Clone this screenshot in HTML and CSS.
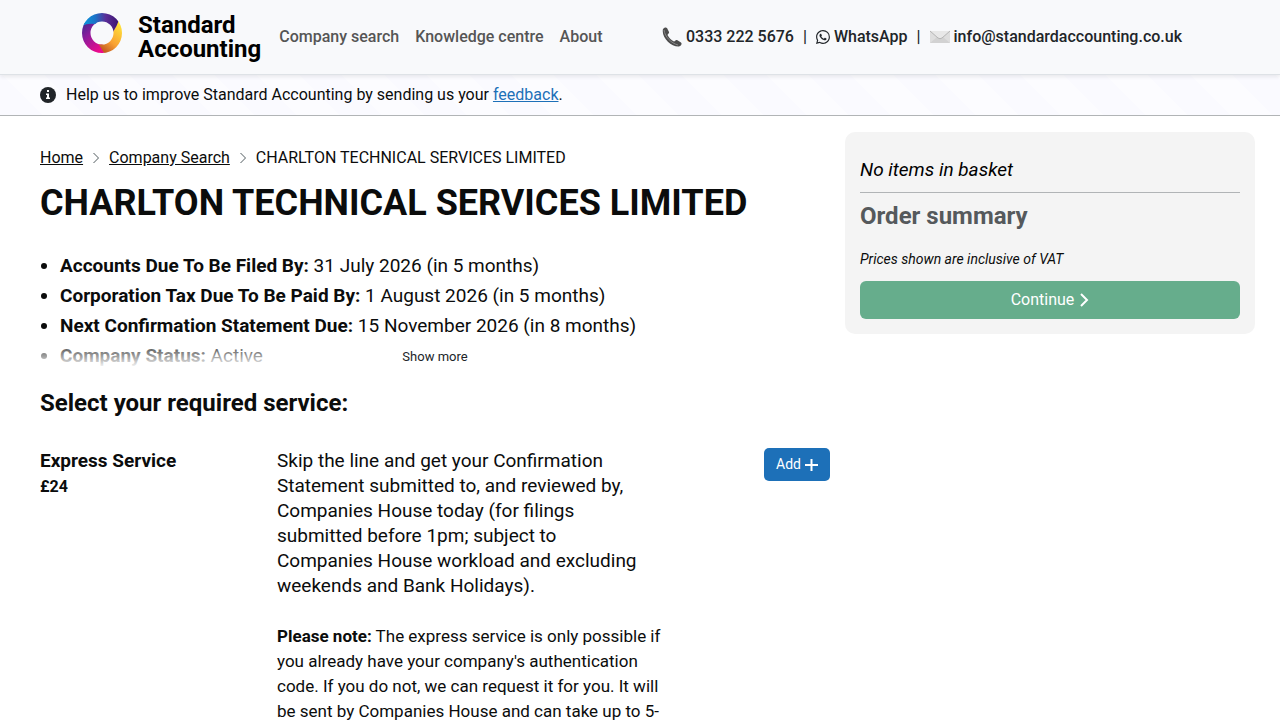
FILE: index.html
```html
<!DOCTYPE html>
<html lang="en">
<head>
<meta charset="utf-8">
<meta name="viewport" content="width=device-width, initial-scale=1">
<title>CHARLTON TECHNICAL SERVICES LIMITED</title>
<link rel="stylesheet" href="styles.css">
</head>
<body>
<header class="site-header">
  <a class="brand" href="#">
    <svg class="brand-logo" viewBox="0 0 40 40" aria-hidden="true">
      <defs>
        <linearGradient id="top" x1="0" y1="0" x2="1" y2="0"><stop offset="0" stop-color="#0a9be0"/><stop offset=".35" stop-color="#1a74c8"/><stop offset=".65" stop-color="#5b2d96"/><stop offset="1" stop-color="#3a1470"/></linearGradient>
        <linearGradient id="left" x1="0" y1="0" x2=".7" y2="1"><stop offset="0" stop-color="#3f2a90"/><stop offset=".4" stop-color="#8c1c9c"/><stop offset="1" stop-color="#ee0a8c"/></linearGradient>
        <linearGradient id="right" x1=".8" y1="0" x2=".2" y2="1"><stop offset="0" stop-color="#ffe93b"/><stop offset=".6" stop-color="#f9a032"/><stop offset="1" stop-color="#b8501f"/></linearGradient>
        <clipPath id="ring"><path clip-rule="evenodd" d="M0 20a20 20 0 1 0 40 0a20 20 0 1 0-40 0ZM8.500 20a11.500 11.500 0 1 0 23 0a11.500 11.500 0 1 0-23 0Z"/></clipPath>
      </defs>
      <g clip-path="url(#ring)">
        <path fill="url(#left)" d="M0 10H20V28L22 40H0Z"/>
        <path fill="url(#right)" d="M37 7H40V40H22L16 30L30 20Z"/>
        <path fill="url(#top)" d="M0 13V0H33L37 7Q35 13 31 19H20L13 11Q5 10 0 13Z"/>
      </g>
    </svg>
    <span class="brand-name">Standard<br>Accounting</span>
  </a>
  <nav class="main-nav">
    <a href="#">Company search</a>
    <a href="#">Knowledge centre</a>
    <a href="#">About</a>
  </nav>
  <div class="contact">
    <a href="#"><svg class="icon-phone" viewBox="0 0 20 20" aria-hidden="true"><path fill="#4d4d4d" d="M1 2C2 .5 4 0 5 1L7 5C7.500 6.500 5.500 7 5.500 8C7 11 9 13 12 14.500C13 14.500 13.500 12.500 15 13L19 15.500C20.500 17 19 19 17 19.500C9 20-1 10 1 2Z"/><path fill="none" stroke="#888" d="M2 3C3 10 9 16 16 18"/></svg>0333 222 5676</a>
    <span>|</span>
    <a href="#"><svg class="icon-whatsapp" viewBox="0 0 16 16" aria-hidden="true"><path fill="currentColor" d="M13.601 2.326A7.850 7.850 0 0 0 7.994 0C3.627 0 .068 3.558.064 7.926c0 1.399.366 2.760 1.057 3.965L0 16l4.204-1.102a7.900 7.900 0 0 0 3.790.965h.004c4.368 0 7.926-3.558 7.930-7.930A7.900 7.900 0 0 0 13.600 2.326zM7.994 14.521a6.600 6.600 0 0 1-3.356-.920l-.240-.144-2.494.654.666-2.433-.156-.251a6.560 6.560 0 0 1-1.007-3.505c0-3.626 2.957-6.584 6.591-6.584a6.560 6.560 0 0 1 4.660 1.931 6.560 6.560 0 0 1 1.928 4.660c-.004 3.639-2.961 6.592-6.592 6.592zm3.615-4.934c-.197-.099-1.170-.578-1.353-.646-.182-.065-.315-.099-.445.099-.133.197-.513.646-.627.775-.114.133-.232.148-.430.050-.197-.100-.836-.308-1.592-.985-.590-.525-.985-1.175-1.103-1.372-.114-.198-.011-.304.088-.403.087-.088.197-.232.296-.346.100-.114.133-.198.198-.330.065-.134.034-.248-.015-.347-.050-.099-.445-1.076-.612-1.470-.160-.389-.323-.335-.445-.340-.114-.007-.247-.007-.380-.007a.730.730 0 0 0-.529.247c-.182.198-.691.677-.691 1.654s.710 1.916.810 2.049c.098.133 1.394 2.132 3.383 2.992.470.205.840.326 1.129.418.475.152.904.129 1.246.080.380-.058 1.171-.480 1.338-.943.164-.464.164-.860.114-.943-.049-.084-.182-.133-.380-.232z"/></svg>WhatsApp</a>
    <span>|</span>
    <a href="#"><svg class="icon-mail" viewBox="0 0 20 14" aria-hidden="true"><path fill="#dedede" d="M0 1h20v12H0z"/><path fill="#d2d2d2" d="M0 13 7 7h6l7 6z"/><path fill="#e8e8e8" stroke="#b5b5b5" d="M0 1 8 8Q10 9.500 12 8L20 1"/></svg>info@standardaccounting.co.uk</a>
  </div>
</header>
<div class="notice">
  <svg class="icon-info" viewBox="0 0 16 16" aria-hidden="true"><circle cx="8" cy="8" r="8" fill="#212529"/><path fill="#fff" d="M7 3h2v2H7zM6 6.500h3v4h1V12H6v-1.500h1V8H6z"/></svg>
  <p>Help us to improve Standard Accounting by sending us your <a href="#">feedback</a>.</p>
</div>
<div class="page">
  <main>
    <nav class="breadcrumb" aria-label="Breadcrumb">
      <a href="#">Home</a>
      <svg class="icon-crumb" viewBox="0 0 6 10" aria-hidden="true"><path d="m.5 0 5 5-5 5"/></svg>
      <a href="#">Company Search</a>
      <svg class="icon-crumb" viewBox="0 0 6 10" aria-hidden="true"><path d="m.5 0 5 5-5 5"/></svg>
      <span>CHARLTON TECHNICAL SERVICES LIMITED</span>
    </nav>
    <h1>CHARLTON TECHNICAL SERVICES LIMITED</h1>
    <div class="facts">
      <ul>
        <li><b>Accounts Due To Be Filed By:</b> 31 July 2026 (in 5 months)</li>
        <li><b>Corporation Tax Due To Be Paid By:</b> 1 August 2026 (in 5 months)</li>
        <li><b>Next Confirmation Statement Due:</b> 15 November 2026 (in 8 months)</li>
        <li><b>Company Status:</b> Active</li>
      </ul>
      <button class="show-more" type="button">Show more</button>
    </div>
    <h2>Select your required service:</h2>
    <section class="service">
      <div>
        <h3>Express Service</h3>
        <p class="price">£24</p>
      </div>
      <div>
        <p class="lead">Skip the line and get your Confirmation Statement submitted to, and reviewed by, Companies House today (for filings submitted before 1pm; subject to Companies House workload and excluding weekends and Bank Holidays).</p>
        <p class="note"><b>Please note:</b> The express service is only possible if you already have your company's authentication code. If you do not, we can request it for you. It will be sent by Companies House and can take up to 5-</p>
      </div>
      <button class="add" type="button">Add<svg class="icon-plus" viewBox="0 0 13 13" aria-hidden="true"><path d="M6.500 1v12M0 7h13"/></svg></button>
    </section>
  </main>
  <aside class="basket">
    <p class="empty">No items in basket</p>
    <h2>Order summary</h2>
    <p class="vat">Prices shown are inclusive of VAT</p>
    <button class="continue" type="button">Continue<svg class="icon-next" viewBox="0 0 10 14" aria-hidden="true"><path d="m2 1 6 6-6 6"/></svg></button>
  </aside>
</div>
</body>
</html>
```
FILE: styles.css
```css
* { box-sizing: border-box; }
body { margin: 0; font: 16px/25px Roboto, "Liberation Sans", sans-serif; color: #0b0c0c; background: #fff; }
h1, h2, h3, p, ul { margin: 0; }
button { font-family: inherit; border: 0; cursor: pointer; }
b { font-weight: 700; }
.site-header { position: relative; display: flex; align-items: center; min-height: 75px; padding: 0 98px 0 82px; background: #f8f9fb; border-bottom: 1px solid #dee2e6; box-shadow: 0 2px 4px rgba(0, 0, 0, .08); font-weight: 500; line-height: 24px; }
.site-header a { text-decoration: none; }
.brand { display: flex; gap: 16px; color: #000; }
.brand-logo { width: 40px; height: 40px; }
.brand-name { font-size: 24px; line-height: 24px; font-weight: 700; }
.main-nav { display: flex; gap: 16px; margin-left: 18px; }
.main-nav a { color: #555; }
.contact { display: flex; align-items: center; gap: 9px; margin-left: auto; color: #212529; }
.contact a { display: flex; align-items: center; gap: 4px; color: inherit; }
.icon-phone { width: 20px; height: 20px; }
.icon-whatsapp { width: 14px; height: 14px; }
.icon-mail { width: 20px; height: 14px; }
.notice { display: flex; align-items: center; gap: 10px; padding: 7px 40px 8px; border-bottom: 1px solid #b1b4b6; background: repeating-linear-gradient(45deg, #fafaff, #fafaff 30px, #fcfcff 30px, #fcfcff 60px); }
.notice a { color: #1d70b8; }
.icon-info { width: 16px; height: 16px; }
.page { display: grid; grid-template-columns: minmax(0, 79fr) minmax(0, 41fr); gap: 15px; align-items: start; padding: 16px 25px 0 40px; }
.breadcrumb { display: flex; align-items: center; gap: 10px; padding-top: 13px; }
.breadcrumb a { color: inherit; }
.icon-crumb { width: 6px; height: 10px; fill: none; stroke: #505a5f; }
h1 { margin-top: 13px; font-size: 36px; line-height: 40px; font-weight: 700; }
.facts { position: relative; margin-top: 28px; height: 117px; overflow: hidden; font-size: 19px; line-height: 30px; }
.facts ul { padding-left: 20px; }
.facts::after { content: ""; position: absolute; inset: auto 0 0; height: 30px; background: linear-gradient(rgba(255, 255, 255, 0), #fff); }
.show-more { position: absolute; z-index: 1; left: 50%; bottom: 0; transform: translateX(-50%); background: none; font-size: 13px; line-height: 20px; color: #212529; }
main h2 { margin-top: 20px; font-size: 24px; line-height: 30px; }
.service { display: grid; grid-template-columns: 3fr 5fr 2fr; align-items: start; margin-top: 30px; }
h3 { font-size: 19px; line-height: 25px; }
.price { margin-top: 1px; font-weight: 700; }
.lead { margin-bottom: 26px; padding-right: 15px; font-size: 19px; line-height: 25px; }
.note { font-size: 17px; }
.add { justify-self: end; display: flex; align-items: center; gap: 4px; padding: 6px 12px; border-radius: 5px; background: #1d70b8; color: #fff; font-size: 14px; line-height: 21px; }
.icon-plus { width: 13px; height: 13px; fill: none; stroke: #fff; stroke-width: 2; }
.basket { padding: 25px 15px 15px; border-radius: 10px; background: #f4f4f4; }
.empty { padding-bottom: 10px; border-bottom: 1px solid #b1b4b6; font-size: 19px; font-style: italic; color: #000; }
.basket h2 { margin-top: 8px; font-size: 24px; line-height: 30px; color: #55595c; }
.vat { margin-top: 16px; font-size: 14px; line-height: 25px; font-style: italic; }
.continue { display: flex; align-items: center; justify-content: center; gap: 5px; width: 100%; margin-top: 9px; padding: 7px 12px; border-radius: 6px; background: #66ad8c; color: #fff; font-size: 16px; line-height: 24px; }
.icon-next { width: 10px; height: 14px; fill: none; stroke: #fff; stroke-width: 2; }
```
